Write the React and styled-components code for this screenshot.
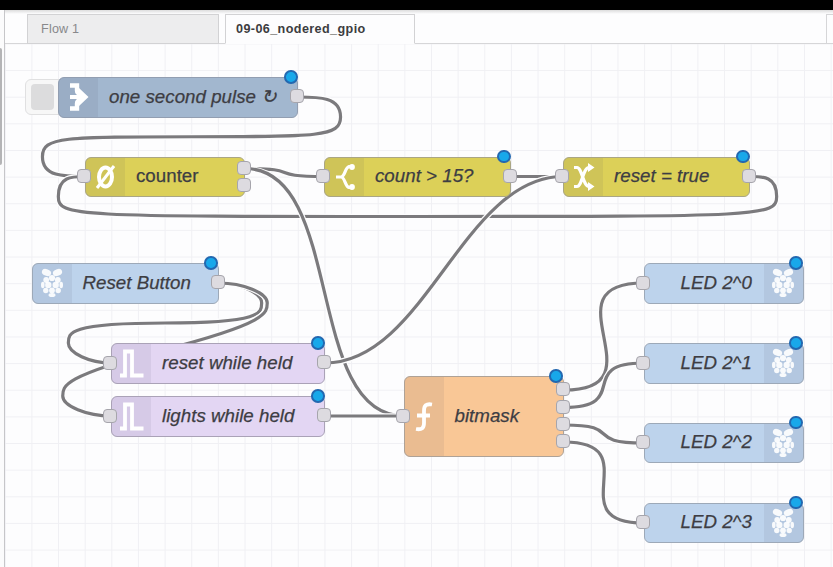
import React from 'react';
import styled, { createGlobalStyle } from 'styled-components';

const GlobalStyle = createGlobalStyle`
  * { box-sizing: border-box; }
  body { margin: 0; background: #fdfdfe; overflow: hidden; }
`;

const Editor = styled.div`
  width: 833px;
  height: 567px;
  display: flex;
  flex-direction: column;
  overflow: hidden;
  font-family: 'Liberation Sans', Arial, sans-serif;
`;

const HeaderBar = styled.div`
  flex: none;
  height: 10px;
  background: #000;
`;

const Main = styled.div`
  flex: 1;
  display: flex;
  min-height: 0;
`;

const PaletteEdge = styled.div`
  width: 4px;
  background: #fbfbfc;
  padding-top: 38px;
`;

const ScrollThumb = styled.div`
  width: 2px;
  height: 117px;
  border-radius: 0 2px 2px 0;
  background: #b4b4b6;
`;

const Workspace = styled.div`
  flex: 1;
  display: flex;
  flex-direction: column;
  border-left: 1px solid #c6c6c9;
  min-width: 0;
`;

const TabBar = styled.div`
  flex: none;
  display: flex;
  align-items: stretch;
  gap: 6px;
  height: 34px;
  padding: 4px 0 0 22px;
  background: linear-gradient(#dcdcdc, #fdfdfe 4px);
  box-shadow: inset 0 -1px 0 #d6d6d8;
`;

const Tab = styled.div`
  display: flex;
  align-items: center;
  width: ${(p) => (p.$active ? 190 : 192)}px;
  padding: 0 0 1px ${(p) => (p.$active ? 10 : 13)}px;
  border: 1px solid #d2d2d4;
  border-bottom-color: ${(p) => (p.$active ? '#fdfdfe' : '#d2d2d4')};
  background: ${(p) => (p.$active ? '#fdfdfe' : '#ededee')};
  color: ${(p) => (p.$active ? '#3c3c40' : '#88888b')};
  font-size: 12.6px;
  font-weight: ${(p) => (p.$active ? 700 : 400)};
  letter-spacing: ${(p) => (p.$active ? 0.4 : 0.2)}px;
  white-space: nowrap;
`;

const TabAddButton = styled.div`
  width: 7px;
  margin-left: auto;
  border: 1px solid #d6d6d8;
  border-right: 0;
`;

const Canvas = styled.div`
  position: relative;
  flex: 1;
  background-color: #fdfdfe;
  background-image:
    linear-gradient(to right, #f0f0f4 1.3px, transparent 1.3px),
    linear-gradient(to bottom, #f0f0f4 1.3px, transparent 1.3px);
  background-size: 26.65px 26.65px;
  background-position: 26.4px -0.6px;
`;

const WireLayer = styled.svg`
  position: absolute;
  inset: 0;
  width: 828px;
  height: 523px;
  fill: none;
`;

const NodeBox = styled.div`
  position: absolute;
  left: ${(p) => p.$x - 5}px;
  top: ${(p) => p.$y - 44}px;
  width: ${(p) => p.$w}px;
  height: ${(p) => p.$h}px;
  display: flex;
  flex-direction: ${(p) => (p.$flip ? 'row-reverse' : 'row')};
  align-items: stretch;
  border: 1.6px solid ${(p) => p.$edge};
  border-radius: 6px;
  background: ${(p) => p.$fill};
`;

const IconArea = styled.div`
  flex: none;
  width: 39px;
  display: flex;
  align-items: center;
  justify-content: center;
  border-radius: ${(p) => (p.$flip ? '0 4px 4px 0' : '4px 0 0 4px')};
  background: rgba(70, 60, 90, 0.08);
`;

const Label = styled.div`
  flex: 1;
  display: flex;
  align-items: center;
  padding-left: ${(p) => (p.$flip ? 36 : 11)}px;
  padding-bottom: 1px;
  color: #3d3d43;
  font-size: 18.7px;
  font-style: ${(p) => (p.$upright ? 'normal' : 'italic')};
  letter-spacing: 0.03px;
  -webkit-text-stroke: 0.25px #3d3d43;
  white-space: pre;
`;

const Port = styled.i`
  position: absolute;
  left: ${(p) => p.$x - 1.6}px;
  top: ${(p) => p.$y - 1.6}px;
  width: 14px;
  height: 14px;
  margin: -7px;
  border: 1.4px solid #a6a5ac;
  border-radius: 4px;
  background: #dddbe0;
`;

const ChangedDot = styled.i`
  position: absolute;
  right: -0.5px;
  top: -8px;
  width: 13.6px;
  height: 13.6px;
  border: 2.6px solid #2368b0;
  border-radius: 50%;
  background: #18a8ea;
`;

const InjectButton = styled.div`
  position: absolute;
  left: 20px;
  top: 35px;
  width: 40px;
  height: 36px;
  padding: 4px 5px;
  border: 1.4px solid #e0e0e1;
  border-radius: 6px;
  background: #f7f7f7;
`;

const ButtonFace = styled.div`
  width: 23px;
  height: 26px;
  border-radius: 4px;
  background: #dcdcdd;
`;

const Glyph = styled.svg`
  width: 40px;
  height: 40px;
  flex: none;
  fill: none;
  stroke: #fff;
  stroke-width: 3;
`;

const icons = {
  inject: (
    <>
      <path d="M11 8.500h7v5c0 2 1 3 4 3M11 31.500h7v-5c0-2 1-3 4-3" strokeWidth="4.400" />
      <path d="M11 20h9" strokeWidth="4" />
      <path d="M20 11l9.500 9-9.500 9v-5.500h-2v-7h2z" fill="#fff" stroke="none" />
    </>
  ),
  counter: (
    <>
      <ellipse cx="19.500" cy="20" rx="6.500" ry="9.500" strokeWidth="4" />
      <path d="M11 31L28 9" strokeWidth="3" />
    </>
  ),
  split: (
    <>
      <path d="M11 20h5c4 0 4-9.500 8-10.500h3M16 20c4 0 4 9.500 8 10.500h3" strokeWidth="3.200" />
      <circle cx="27" cy="10" r="2.900" fill="#fff" stroke="none" />
      <circle cx="27" cy="30" r="2.900" fill="#fff" stroke="none" />
    </>
  ),
  change: (
    <>
      <path d="M10 10.500h3c5 0 6 19 12 19h2M10 29.500h3c5 0 6-19 12-19h2" strokeWidth="3.200" />
      <path d="M24 6l6.500 4.500-6.500 4.500zM24 25l6.500 4.500-6.500 4.500z" fill="#fff" stroke="none" />
    </>
  ),
  pulse: <path d="M8 32.500h5V8.500h7v24h11.500" strokeWidth="3.800" />,
  fn: (
    <path d="M28 7.500c-6-1-8 1-8 6.500v12c0 5-2 7-8 6M13 18.500h13" strokeWidth="3.800" />
  ),
  pi: (
    <g fill="#fff" stroke="none" fillOpacity="0.9">
      <ellipse cx="14.500" cy="9.500" rx="4.800" ry="3.300" transform="rotate(22 14.500 9.500)" />
      <ellipse cx="25.500" cy="9.500" rx="4.800" ry="3.300" transform="rotate(-22 25.500 9.500)" />
      <circle cx="20" cy="15" r="3.100" />
      <circle cx="14.200" cy="17" r="2.900" />
      <circle cx="25.800" cy="17" r="2.900" />
      <circle cx="16.300" cy="22" r="3.200" />
      <circle cx="23.700" cy="22" r="3.200" />
      <ellipse cx="10.800" cy="22" rx="1.800" ry="3.200" />
      <ellipse cx="29.200" cy="22" rx="1.800" ry="3.200" />
      <circle cx="13.800" cy="27.500" r="2.700" />
      <circle cx="26.200" cy="27.500" r="2.700" />
      <circle cx="20" cy="27.500" r="2.900" />
      <ellipse cx="20" cy="32" rx="3.500" ry="2" />
    </g>
  ),
};

const palette = {
  slate: { fill: '#a2b7cf', edge: '#929eb1' },
  yellow: { fill: '#dcd058', edge: '#aaa684' },
  blue: { fill: '#bdd3ec', edge: '#9da9b8' },
  lilac: { fill: '#e3d6f3', edge: '#aaa2b7' },
  orange: { fill: '#f9c796', edge: '#aea297' },
};

const nodes = [
  { label: 'one second pulse ↻', icon: 'inject', tone: 'slate', x: 58, y: 77, w: 240, outs: [20], changed: true },
  { label: 'counter', icon: 'counter', tone: 'yellow', x: 85, y: 156.500, w: 160, input: true, outs: [12, 29], upright: true },
  { label: 'count > 15?', icon: 'split', tone: 'yellow', x: 324, y: 156.500, w: 187, input: true, outs: [20], changed: true },
  { label: 'reset = true', icon: 'change', tone: 'yellow', x: 563, y: 156.500, w: 187, input: true, outs: [20], changed: true },
  { label: 'Reset Button', icon: 'pi', tone: 'blue', x: 31.500, y: 263, w: 187, outs: [20], changed: true },
  { label: 'reset while held', icon: 'pulse', tone: 'lilac', x: 111, y: 343, w: 214, input: true, outs: [20], changed: true },
  { label: 'lights while held', icon: 'pulse', tone: 'lilac', x: 111, y: 396, w: 214, input: true, outs: [20], changed: true },
  { label: 'bitmask', icon: 'fn', tone: 'orange', x: 403.500, y: 376, w: 160, h: 81, input: true, outs: [14, 31.500, 49, 66], changed: true },
  { label: 'LED 2^0', icon: 'pi', tone: 'blue', x: 643.500, y: 263, w: 160, input: true, flip: true, changed: true },
  { label: 'LED 2^1', icon: 'pi', tone: 'blue', x: 643.500, y: 343, w: 160, input: true, flip: true, changed: true },
  { label: 'LED 2^2', icon: 'pi', tone: 'blue', x: 643.500, y: 422.500, w: 160, input: true, flip: true, changed: true },
  { label: 'LED 2^3', icon: 'pi', tone: 'blue', x: 643.500, y: 502.500, w: 160, input: true, flip: true, changed: true },
];

// Each wire is [x1, y1, x2, y2] in editor coordinates.
const wires = [
  [298, 97, 85, 176.500],
  [750, 176.500, 85, 176.500],
  [245, 168.500, 324, 176.500],
  [245, 168.500, 404, 416],
  [511, 176.500, 563, 176.500],
  [325, 363, 563, 176.500],
  [219, 283, 111, 363],
  [219, 283, 111, 416],
  [325, 416, 404, 416],
  [564, 390, 643.500, 283],
  [564, 407.500, 643.500, 363],
  [564, 425, 643.500, 443],
  [564, 442, 643.500, 523],
];

const REACH = 133.300;
const DROP = 40;

function wirePath([ox, oy, tx, ty]) {
  const dx = tx - ox;
  const dy = ty - oy;
  const delta = Math.hypot(dx, dy);
  if (dx > 0) {
    const s = delta < REACH ? 0.75 - 0.75 * ((REACH - delta) / REACH) : 0.75;
    return `M${ox} ${oy}C${ox + REACH * s} ${oy} ${tx - REACH * s} ${ty} ${tx} ${ty}`;
  }
  const s = 0.4 - 0.2 * Math.max(0, (REACH - Math.min(Math.abs(dx), Math.abs(dy))) / REACH);
  const cp = DROP / 2;
  const midX = tx - dx / 2;
  const midY = dy === 0 ? ty + DROP : ty - dy / 2;
  const y1 = (ty + midY) / 2;
  const down = dy > 0;
  const topX = ox + REACH * s;
  const topY = down ? Math.min(y1 - dy / 2, oy + cp) : Math.max(y1 - dy / 2, oy - cp);
  const botX = tx - REACH * s;
  const botY = down ? Math.max(y1, ty - cp) : Math.min(y1, ty + cp);
  const x1 = (ox + topX) / 2;
  const dir = down ? 1 : -1;
  const c = [
    [x1, oy],
    [topX, down ? Math.max(oy, topY - cp) : Math.min(oy, topY + cp)],
    [x1, down ? Math.min(midY, topY + cp) : Math.max(midY, topY - cp)],
    [botX, down ? Math.max(midY, botY - cp) : Math.min(midY, botY + cp)],
    [(tx + botX) / 2, ty],
  ];
  if (c[2][1] === topY + dir * cp) {
    if (Math.abs(dy) < cp * 10) {
      c[1][1] = topY - (dir * cp) / 2;
      c[3][1] = botY - (dir * cp) / 2;
    }
    c[2][0] = topX;
  }
  return `M${ox} ${oy}C${c[0]} ${c[1]} ${topX} ${topY}S${c[2]} ${midX} ${midY}S${c[3]} ${botX} ${botY}S${c[4]} ${tx} ${ty}`;
}

function Wire({ points }) {
  const d = wirePath(points);
  return (
    <>
      <path d={d} stroke="#fdfdfe" strokeWidth="5.600" />
      <path d={d} stroke="#7b7a7d" strokeWidth="3.200" />
    </>
  );
}

function FlowNode({ node }) {
  const { x, y, w, h = 40.500, tone, icon, label, input, outs = [], flip, changed, upright } = node;
  const { fill, edge } = palette[tone];
  return (
    <NodeBox $x={x} $y={y} $w={w} $h={h} $fill={fill} $edge={edge} $flip={flip}>
      <IconArea $flip={flip}>
        <Glyph viewBox="0 0 40 40">{icons[icon]}</Glyph>
      </IconArea>
      <Label $flip={flip} $upright={upright}>{label}</Label>
      {input && <Port $x={0} $y={h / 2} />}
      {outs.map((oy) => (
        <Port key={oy} $x={w} $y={oy} />
      ))}
      {changed && <ChangedDot />}
    </NodeBox>
  );
}

export default function App() {
  return (
    <Editor>
      <GlobalStyle />
      <HeaderBar />
      <Main>
        <PaletteEdge>
          <ScrollThumb />
        </PaletteEdge>
        <Workspace>
          <TabBar>
            <Tab>Flow 1</Tab>
            <Tab $active>09-06_nodered_gpio</Tab>
            <TabAddButton />
          </TabBar>
          <Canvas>
            <WireLayer viewBox="5 44 828 523">
              {wires.map((w) => (
                <Wire key={w.join()} points={w} />
              ))}
            </WireLayer>
            <InjectButton>
              <ButtonFace />
            </InjectButton>
            {nodes.map((n) => (
              <FlowNode key={n.label} node={n} />
            ))}
          </Canvas>
        </Workspace>
      </Main>
    </Editor>
  );
}
